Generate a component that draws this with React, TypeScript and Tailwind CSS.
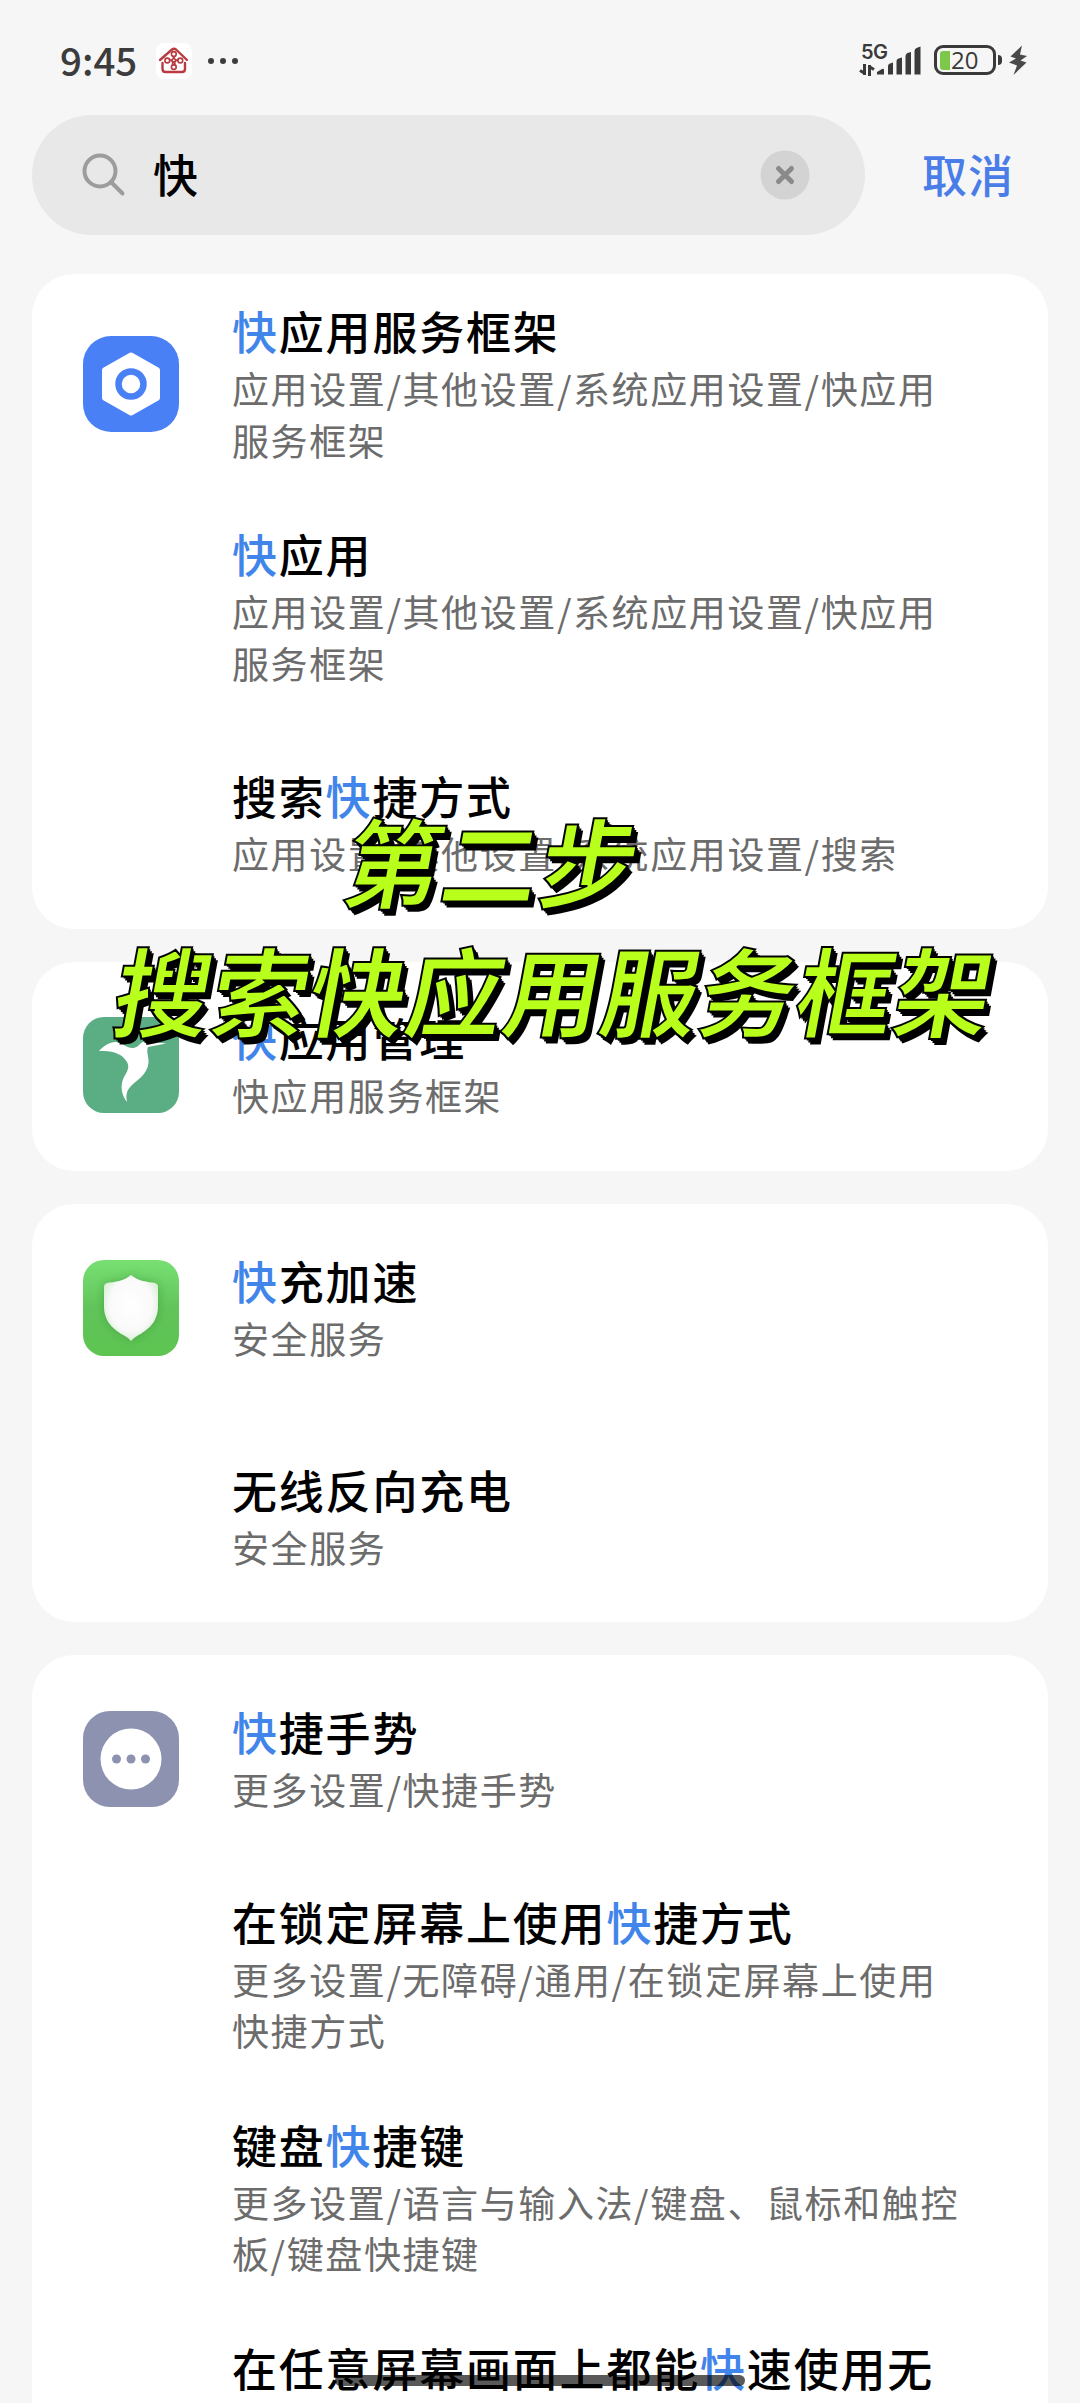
import type { ReactNode } from "react";

const KEYWORD = "快";

interface ResultItem {
  title: string;
  path: string;
  tall?: boolean;
}

interface ResultGroup {
  icon: ReactNode;
  items: ResultItem[];
}

function FrameworkIcon() {
  return (
    <svg viewBox="0 0 96 96" className="size-24">
      <rect width="96" height="96" rx="28" fill="#4a80f5" />
      <path
        d="M48 19 L74.5 34 V62 L48 77 L21.5 62 V34 Z"
        fill="#fff"
        stroke="#fff"
        strokeWidth="5"
        strokeLinejoin="round"
      />
      <circle cx="48" cy="48" r="12.5" fill="#fff" stroke="#4a80f5" strokeWidth="6.5" />
    </svg>
  );
}

function BirdIcon() {
  return (
    <svg viewBox="0 0 96 96" className="size-24">
      <rect width="96" height="96" rx="21" fill="#5bad84" />
      <path
        d="M16 34 C24 26 32 22 41 28 C47 32 53 32 57 27 C59 25 62 24 66 24.5 L83 26.5 L65 30 C63 35 66 39 65.5 46 C64 58 54 63 48 69 C43 74 43 79 44 85 C38 78 37 68 41 60 C44 55 47 50 44 45 C38 35 28 34 16 34 Z"
        fill="#fff"
      />
    </svg>
  );
}

function ShieldIcon() {
  return (
    <svg viewBox="0 0 96 96" className="size-24">
      <defs>
        <linearGradient id="shieldBg" x1="0" y1="0" x2="0" y2="1">
          <stop offset="0%" stopColor="#78e073" />
          <stop offset="50%" stopColor="#61c45a" />
          <stop offset="100%" stopColor="#5dc451" />
        </linearGradient>
        <radialGradient id="shieldFill" cx="0.5" cy="0.45" r="0.65">
          <stop offset="0%" stopColor="#fff" />
          <stop offset="60%" stopColor="#fafafa" />
          <stop offset="100%" stopColor="#c8ebc4" />
        </radialGradient>
        <filter id="shieldShadow" x="-30%" y="-30%" width="160%" height="160%">
          <feDropShadow dx="0" dy="0" stdDeviation="5" floodColor="#2f7d2b" floodOpacity="0.45" />
        </filter>
      </defs>
      <rect width="96" height="96" rx="21" fill="url(#shieldBg)" />
      <path
        d="M48 15 C55 21 64 22 72 23 Q75 24 75 27 V46 C75 62 65 70 54 76 Q50 78 48 81 Q46 78 42 76 C31 70 21 62 21 46 V27 Q21 24 24 23 C32 22 41 21 48 15 Z"
        fill="url(#shieldFill)"
        filter="url(#shieldShadow)"
      />
    </svg>
  );
}

function MoreIcon() {
  return (
    <svg viewBox="0 0 96 96" className="size-24">
      <rect width="96" height="96" rx="27" fill="#8d92b0" />
      <circle cx="48" cy="48" r="30.5" fill="#fff" />
      <circle cx="33.5" cy="48" r="4.5" fill="#8d92b0" />
      <circle cx="48" cy="48" r="4.5" fill="#8d92b0" />
      <circle cx="62.5" cy="48" r="4.5" fill="#8d92b0" />
    </svg>
  );
}

const GROUPS: ResultGroup[] = [
  {
    icon: <FrameworkIcon />,
    items: [
      { title: "快应用服务框架", path: "应用设置/其他设置/系统应用设置/快应用服务框架", tall: true },
      { title: "快应用", path: "应用设置/其他设置/系统应用设置/快应用服务框架", tall: true },
      { title: "搜索快捷方式", path: "应用设置/其他设置/系统应用设置/搜索" },
    ],
  },
  {
    icon: <BirdIcon />,
    items: [{ title: "快应用管理", path: "快应用服务框架" }],
  },
  {
    icon: <ShieldIcon />,
    items: [
      { title: "快充加速", path: "安全服务" },
      { title: "无线反向充电", path: "安全服务" },
    ],
  },
  {
    icon: <MoreIcon />,
    items: [
      { title: "快捷手势", path: "更多设置/快捷手势" },
      { title: "在锁定屏幕上使用快捷方式", path: "更多设置/无障碍/通用/在锁定屏幕上使用快捷方式", tall: true },
      { title: "键盘快捷键", path: "更多设置/语言与输入法/键盘、鼠标和触控板/键盘快捷键", tall: true },
      { title: "在任意屏幕画面上都能快速使用无", path: "", tall: true },
    ],
  },
];

function Highlighted({ text }: { text: string }) {
  const [before, after] = text.split(KEYWORD);
  if (after === undefined) return <>{text}</>;
  return (
    <>
      {before}
      <span className="text-[#4285ea]">{KEYWORD}</span>
      {after}
    </>
  );
}

function StatusBar() {
  return (
    <header className="flex h-[115px] items-start justify-between pt-[38px] pr-[52px] pl-[60px]">
      <div className="flex h-[42px] items-center">
        <span className="w-24 text-[38.5px] leading-[42px] font-medium text-[#3c3c3c]">9:45</span>
        <svg viewBox="0 0 36 36" className="mt-1 size-9 rounded-lg bg-white" fill="none" stroke="#b83b40" strokeWidth="2.4" strokeLinecap="round" strokeLinejoin="round">
          <path d="M4 17 L16 6.5 Q18 5 20 6.5 L31 17" />
          <path d="M6.5 20 V26 Q6.5 29 9.5 29 H26 Q29 29 29 26 V20" />
          <g strokeWidth="1.6">
            <circle cx="17.8" cy="11" r="2.4" />
            <circle cx="17.8" cy="24" r="2.4" />
            <circle cx="11.3" cy="17.5" r="2.4" />
            <circle cx="24.3" cy="17.5" r="2.4" />
            <path d="M13.5 16.5 L19 20 L18.5 22 M22 16.5 L16.5 20 L17 22 M16.8 13.5 L20 17.5 M18.8 13.5 L15.6 17.5" />
          </g>
        </svg>
        <div className="mt-1 ml-4 flex gap-[6px]">
          <i className="size-[6px] rounded-full bg-[#3c3c3c]" />
          <i className="size-[6px] rounded-full bg-[#3c3c3c]" />
          <i className="size-[6px] rounded-full bg-[#3c3c3c]" />
        </div>
      </div>
      <div className="flex h-10 items-start pt-[6px] text-[#3a3a3a]">
        <div className="flex w-[18px] flex-col">
          <span className="ml-[2px] font-['Inter',sans-serif] text-[20px] leading-[17px] font-semibold tracking-[-0.5px]">5G</span>
          <svg viewBox="0 0 16 12" className="mt-[3px] h-3 w-4 shrink-0" fill="none" stroke="currentColor" strokeWidth="3">
            <path d="M5.5 0 V11 M6 9.5 L1 6.5" />
            <path d="M10.5 12 V1 M10 2.5 L15 5.5" />
          </svg>
        </div>
        <svg viewBox="0 0 45 32" className="h-8 w-[45px]" fill="currentColor">
          <path d="M0 30.5 V28 L5 25 Q7 24 7 26 V30.5 Z" />
          <path d="M11 30.5 V22 Q11 20 13 19.5 L16 18.5 V30.5 Z" />
          <path d="M19.5 30.5 V17 Q19.5 15 21.5 14.5 L25 13.5 V30.5 Z" />
          <path d="M28.5 30.5 V12 Q28.5 10 30.5 9 L34 8 V30.5 Z" />
          <path d="M37.5 30.5 V7 Q37.5 5 39.5 4 L43.5 2.5 V30.5 Z" />
        </svg>
        <div className="mt-[1px] ml-3 flex h-[30px] w-[62px] items-center rounded-[9px] border-[3px] border-[#3a3a3a] pl-[3px]">
          <i className="h-[19px] w-[10px] rounded-l-[3px] bg-[#7dc74b]" />
          <span className="ml-[1px] font-['Open_Sans',sans-serif] text-[24px] leading-6">20</span>
        </div>
        <i className="mt-[11px] ml-[2px] h-[10px] w-1 rounded-r bg-[#3a3a3a]" />
        <svg viewBox="0 0 20 32" className="ml-[6px] h-8 w-5" fill="#4a4a4a">
          <path d="M14 1.5 L2.5 12.5 L8 14.5 L1 18.5 L9 21.5 L5.5 31 L18.5 18.5 L12.5 16.5 L19 12 L12 10.5 Z" />
        </svg>
      </div>
    </header>
  );
}

function SearchRow() {
  return (
    <div className="flex h-[120px] items-center pl-8">
      <div className="flex h-full w-[833px] items-center rounded-full bg-[#e8e8e8] pr-[55px] pl-[50px]">
        <svg viewBox="0 0 44 44" className="size-11" fill="none" stroke="#9c9c9c" strokeWidth="4" strokeLinecap="round">
          <circle cx="18" cy="18" r="15.5" />
          <path d="M29 29 L40.5 40.5" />
        </svg>
        <span className="mb-[3px] ml-[27px] flex-1 text-[45px] leading-[60px] font-medium text-black">{KEYWORD}</span>
        <svg viewBox="0 0 50 50" className="size-[50px]">
          <circle cx="25" cy="25" r="24.5" fill="#d3d3d3" />
          <path d="M18.5 18.5 L31.5 31.5 M31.5 18.5 L18.5 31.5" stroke="#8a8a8a" strokeWidth="5" strokeLinecap="round" />
        </svg>
      </div>
      <span className="mb-[3px] ml-[57px] text-[45px] leading-[60px] font-medium tracking-[1px] text-[#4a7de8]">取消</span>
    </div>
  );
}

function ResultRow({ item, icon }: { item: ResultItem; icon?: ReactNode }) {
  return (
    <li className={item.tall ? "flex h-[223px] items-center pb-[3px] pl-[51px]" : "flex h-[209px] items-center pb-[3px] pl-[51px]"}>
      <div className="mr-[53px] w-24 shrink-0 pt-[1px]">{icon}</div>
      <div className={item.tall ? "h-[165px] w-[740px]" : "h-[113px] w-[740px]"}>
        <h2 className="text-[45px] leading-[60px] font-medium tracking-[1.8px] whitespace-nowrap text-black">
          <Highlighted text={item.title} />
        </h2>
        <p className="mt-[2px] text-[37px] leading-[51.5px] tracking-[1.6px] text-[#6c6c6c]">{item.path}</p>
      </div>
    </li>
  );
}

function Caption() {
  return (
    <div className="absolute top-[794px] left-0 w-full text-center text-[97.5px] leading-[129px] font-bold text-[#b9ff1c] [-webkit-text-stroke:2px_black] [text-shadow:2px_2px_0_black,4px_4px_0_black,6px_6px_0_black]">
      <p className="translate-x-[-47px] skew-x-[-10.5deg]">第二步</p>
      <p className="translate-x-[15px] skew-x-[-10.5deg]">搜索快应用服务框架</p>
    </div>
  );
}

export default function App() {
  return (
    <main className="relative h-[2403px] w-[1080px] overflow-hidden bg-[#f6f6f6] font-['Noto_Sans_CJK_SC',sans-serif]">
      <StatusBar />
      <SearchRow />
      <div className="mt-[38.5px] flex flex-col gap-[33.3px] px-8">
        {GROUPS.map((group) => (
          <ul key={group.items[0].title} className="w-[1016px] rounded-[42px] bg-white">
            {group.items.map((item, i) => (
              <ResultRow key={item.title} item={item} icon={i === 0 ? group.icon : undefined} />
            ))}
          </ul>
        ))}
      </div>
      <Caption />
      <div className="absolute top-[2375px] left-[335px] h-[11px] w-[410px] rounded-full bg-black/65" />
    </main>
  );
}
